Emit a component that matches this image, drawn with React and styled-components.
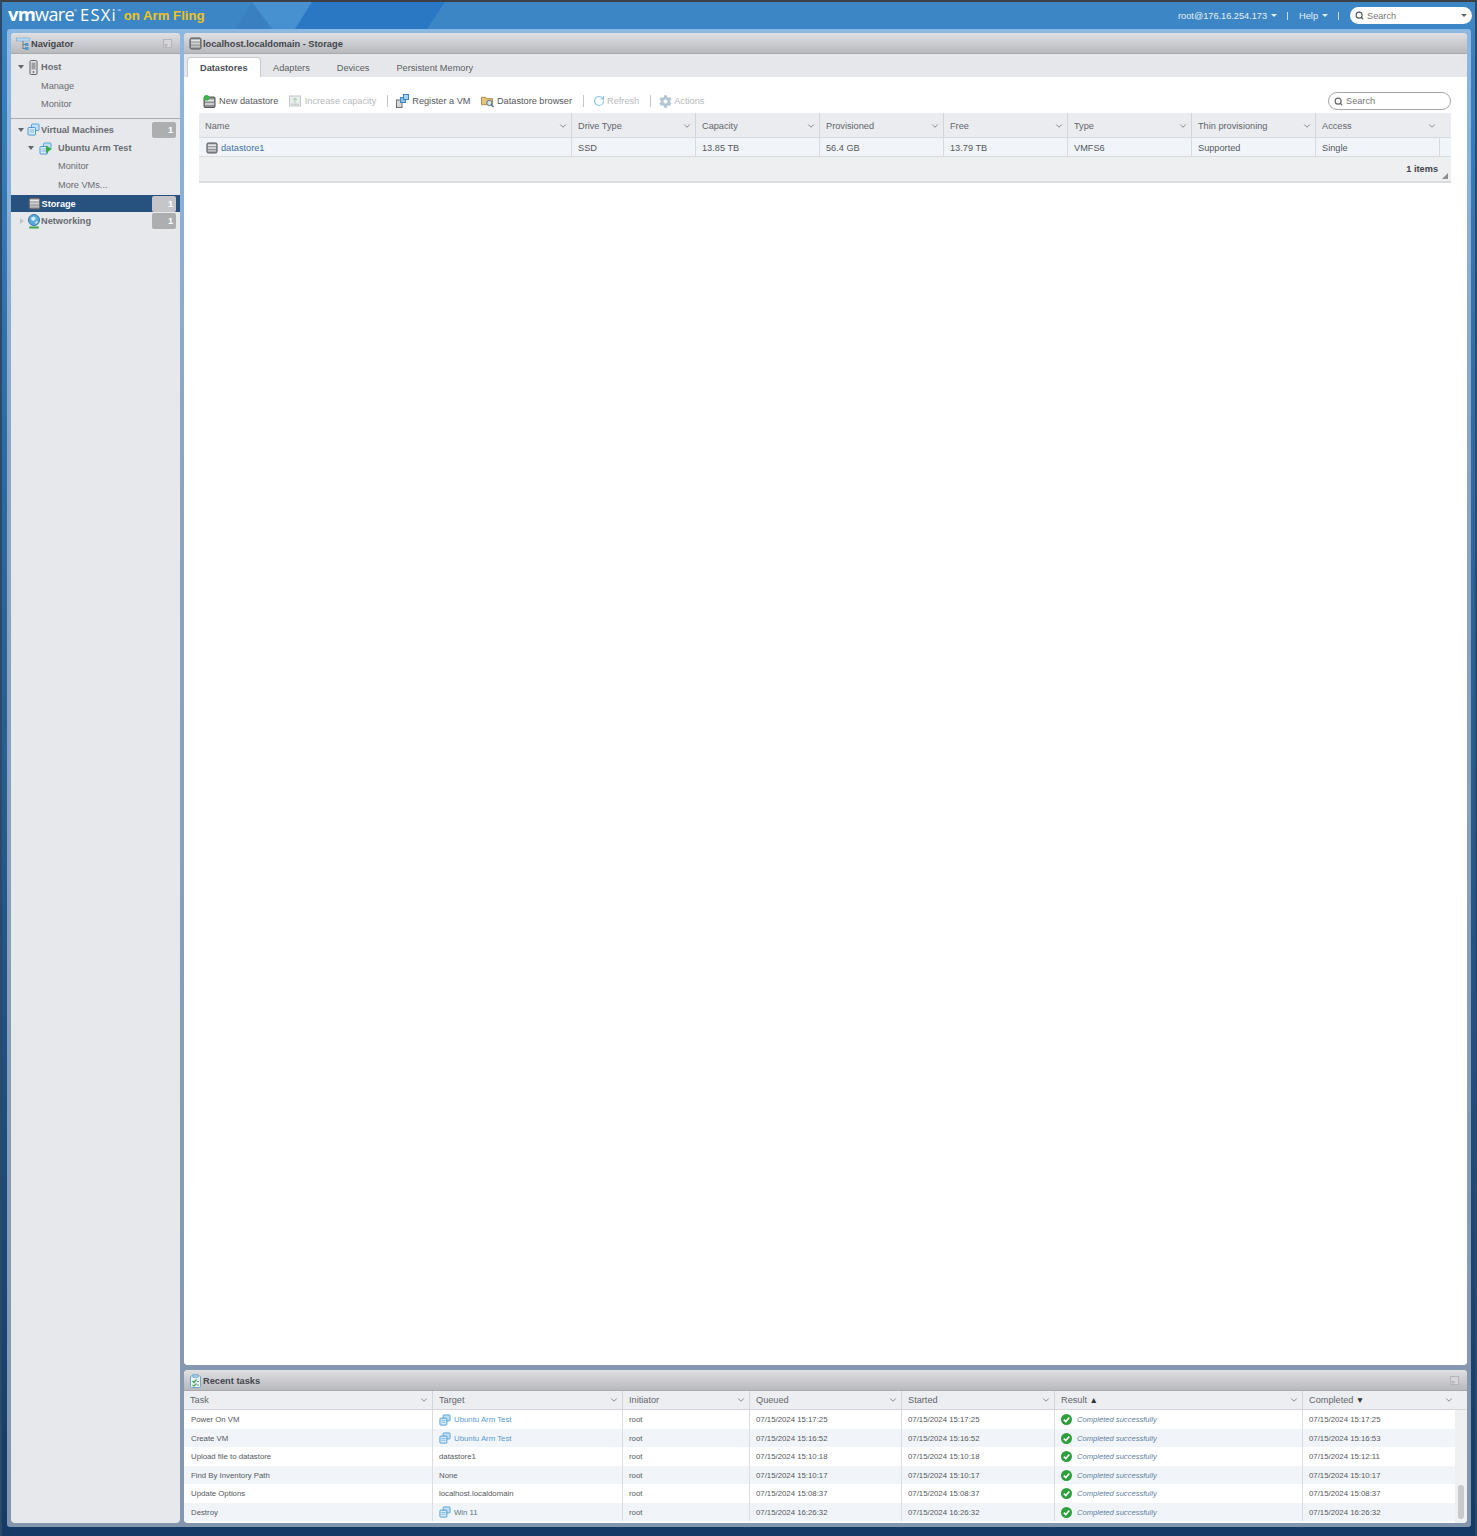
import React from "react";
import styled, { createGlobalStyle } from "styled-components";
import { ChevronDown, RotateCw, Search } from "lucide-react";
import { FaCog } from "react-icons/fa";

const GlobalStyle = createGlobalStyle`
  html, body {
    margin: 0;
    padding: 0;
  }
  body {
    font-family: "Liberation Sans", Arial, sans-serif;
    font-size: 9.2px;
    color: #555;
  }
  * {
    box-sizing: border-box;
  }
`;

const DatastoreIcon = ({ size = 13 }) => (
  <svg width={size} height={size} viewBox="0 0 13 13">
    <rect x="1" y="1" width="11" height="11" rx="1.5" fill="#8d8f92" stroke="#55575a" />
    <rect x="2" y="2.5" width="9" height="2" fill="#e4e4e4" />
    <rect x="2" y="5.5" width="9" height="2" fill="#d2d2d2" />
    <rect x="2" y="8.5" width="9" height="2" fill="#bdbdbd" />
  </svg>
);

const VmIcon = ({ size = 13, power }) => (
  <svg width={size} height={size} viewBox="0 0 13 13">
    <rect x="4.5" y="1" width="7.5" height="6.5" rx="0.8" fill="#bfe0f5" stroke="#5aa3d6" />
    <rect x="1" y="4.5" width="7.5" height="7.5" rx="0.8" fill="#d8eefb" stroke="#4b97cf" />
    <path d="M2.5 7h4.5M2.5 9h4.5" stroke="#7cb9e2" />
    {power && <path d="M7 3.5 12.5 7 7 11.5z" fill="#39a845" />}
  </svg>
);

const HostIcon = () => (
  <svg width="13" height="15" viewBox="0 0 13 15">
    <rect x="3" y="0.5" width="7" height="14" rx="1.2" fill="#e6e6e6" stroke="#5c5e61" />
    <rect x="4.5" y="2.5" width="4" height="7" fill="#9b9da0" />
    <circle cx="6.5" cy="12" r="1" fill="#6b6d70" />
  </svg>
);

const GlobeIcon = () => (
  <svg width="14" height="15" viewBox="0 0 14 15">
    <circle cx="7" cy="6" r="5.5" fill="#5aa9dd" stroke="#2f78b0" />
    <path d="M4 3.5 7 2.5 9 4.5 6.5 7 4.5 6zM8 8l2-1 1 1-2 2z" fill="#d5ecf9" />
    <rect x="2" y="12.5" width="10" height="2" rx="1" fill="#3fa64a" />
  </svg>
);

const NavigatorIcon = () => (
  <svg width="14" height="14" viewBox="0 0 14 14">
    <rect x="0.5" y="1" width="13" height="3" fill="#b9d9ef" stroke="#6fa8d2" strokeWidth="0.6" />
    <path d="M7 4v8M7 7.5h2.5M7 11.5h2.5" stroke="#777" fill="none" />
    <rect x="9" y="6" width="3.5" height="3" fill="#4a9ad6" />
    <rect x="9" y="10" width="3.5" height="3" fill="#4a9ad6" />
  </svg>
);

const CollapseIcon = () => (
  <svg width="9" height="9" viewBox="0 0 9 9">
    <rect x="0.5" y="0.5" width="8" height="8" fill="#d6d6d9" stroke="#b4b5b8" />
    <rect x="1.5" y="5" width="3" height="2.5" fill="#b5b6b9" />
  </svg>
);

const TasksIcon = () => (
  <svg width="13" height="14" viewBox="0 0 13 14">
    <rect x="1.5" y="2" width="10" height="11.5" rx="1" fill="#e8f3f9" stroke="#6ea5c8" />
    <rect x="4" y="0.5" width="5" height="3" fill="#9cc6e0" stroke="#6ea5c8" strokeWidth="0.6" />
    <path d="M3.5 7 5 8.5 7.5 5.5M3.5 11 5 12 7.5 9.5" stroke="#3fa64a" strokeWidth="1.2" fill="none" />
    <path d="M8 7.5h2M8 11h2" stroke="#7d8a92" />
  </svg>
);

const NewDatastoreIcon = () => (
  <svg width="13" height="13" viewBox="0 0 13 13">
    <rect x="1" y="2" width="11" height="10.5" rx="1" fill="#8d8f92" stroke="#55575a" />
    <rect x="2" y="4.5" width="9" height="2" fill="#e4e4e4" />
    <rect x="2" y="8" width="9" height="2" fill="#cfcfcf" />
    <circle cx="3.5" cy="2.8" r="2.8" fill="#3bb54a" />
  </svg>
);

const IncreaseIcon = () => (
  <svg width="12" height="12" viewBox="0 0 12 12">
    <rect x="0.5" y="1" width="11" height="10" fill="#e8ecec" stroke="#c3c8c8" />
    <path d="M6 3v5M4 5l2-2 2 2" stroke="#a9c9a9" fill="none" />
    <rect x="2" y="8.5" width="8" height="1.5" fill="#cdd1d1" />
  </svg>
);

const RegisterIcon = () => (
  <svg width="13" height="14" viewBox="0 0 13 14">
    <rect x="0.5" y="6" width="5.5" height="7.5" fill="#d8d9da" stroke="#6c6e70" />
    <rect x="4.5" y="3.5" width="5" height="5" fill="#8cc2e8" stroke="#3d86bf" />
    <rect x="7.5" y="0.5" width="5" height="5" fill="#a5d2ef" stroke="#3d86bf" />
  </svg>
);

const BrowserIcon = () => (
  <svg width="13" height="13" viewBox="0 0 14 13">
    <path d="M0.5 2h4.5l1 1.5h6.5V10H0.5z" fill="#e7c47a" stroke="#a8874a" />
    <circle cx="9" cy="8" r="2.8" fill="#cfe6f3" stroke="#4d6f86" />
    <path d="m11 10 2.5 2.5" stroke="#4d6f86" strokeWidth="1.4" />
  </svg>
);

const SuccessIcon = () => (
  <svg width="11" height="11" viewBox="0 0 11 11">
    <circle cx="5.5" cy="5.5" r="5.5" fill="#2f9e3f" />
    <path d="M2.8 5.6 4.8 7.6 8.3 3.6" stroke="#fff" strokeWidth="1.5" fill="none" />
  </svg>
);

const hostTree = [
  { label: "Host", indent: 7, caret: "down", icon: <HostIcon />, bold: true },
  { label: "Manage", indent: 30 },
  { label: "Monitor", indent: 30 },
];

const inventoryTree = [
  { label: "Virtual Machines", indent: 7, caret: "down", icon: <VmIcon />, count: 1, bold: true },
  { label: "Ubuntu Arm Test", indent: 17, caret: "down", icon: <VmIcon power />, wide: true, bold: true },
  { label: "Monitor", indent: 47 },
  { label: "More VMs...", indent: 47 },
  { label: "Storage", indent: 16.5, icon: <DatastoreIcon />, count: 1, selected: true, bold: true },
  { label: "Networking", indent: 8, caret: "right", icon: <GlobeIcon />, count: 1, bold: true },
];

const tabs = ["Datastores", "Adapters", "Devices", "Persistent Memory"];

const toolbar = [
  { label: "New datastore", icon: <NewDatastoreIcon /> },
  { label: "Increase capacity", icon: <IncreaseIcon />, disabled: true, sep: true },
  { label: "Register a VM", icon: <RegisterIcon /> },
  { label: "Datastore browser", icon: <BrowserIcon />, sep: true },
  { label: "Refresh", icon: <RotateCw size={12} color="#8cc4ea" strokeWidth={2.4} />, disabled: true, sep: true, gap: 2 },
  { label: "Actions", icon: <FaCog size={13} color="#b3c6d6" />, disabled: true, gap: 2 },
];

const storageColumns = "373px 124px 124px 124px 124px 124px 124px 135px";
const storageHead = ["Name", "Drive Type", "Capacity", "Provisioned", "Free", "Type", "Thin provisioning", "Access"];
const storageRow = ["SSD", "13.85 TB", "56.4 GB", "13.79 TB", "VMFS6", "Supported", "Single"];

const taskHead = ["Task", "Target", "Initiator", "Queued", "Started", "Result", "Completed"];
const taskRows = [
  ["Power On VM", "Ubuntu Arm Test", "07/15/2024 15:17:25", "07/15/2024 15:17:25", "07/15/2024 15:17:25", true],
  ["Create VM", "Ubuntu Arm Test", "07/15/2024 15:16:52", "07/15/2024 15:16:52", "07/15/2024 15:16:53", true],
  ["Upload file to datastore", "datastore1", "07/15/2024 15:10:18", "07/15/2024 15:10:18", "07/15/2024 15:12:11"],
  ["Find By Inventory Path", "None", "07/15/2024 15:10:17", "07/15/2024 15:10:17", "07/15/2024 15:10:17"],
  ["Update Options", "localhost.localdomain", "07/15/2024 15:08:37", "07/15/2024 15:08:37", "07/15/2024 15:08:37"],
  ["Destroy", "Win 11", "07/15/2024 16:26:32", "07/15/2024 16:26:32", "07/15/2024 16:26:32", "dim"],
];

function TreeRow({ item }) {
  return (
    <NavRow $indent={item.indent} $selected={item.selected} $bold={item.bold}>
      {item.caret && <Caret $dir={item.caret} />}
      {item.icon && <NavIcon $wide={item.wide}>{item.icon}</NavIcon>}
      <span>{item.label}</span>
      {item.count && <Badge $selected={item.selected}>{item.count}</Badge>}
    </NavRow>
  );
}

export default function App() {
  return (
    <>
      <GlobalStyle />
      <Shell>
        <TopBar>
          <TopShape $points="250px 0, 310px 0, 293px 27px, 270px 27px" $color="#4891d0" />
          <TopShape $points="250px 0, 233px 27px, 270px 27px" $color="#3a80c0" />
          <TopShape $points="310px 0, 443px 0, 425px 27px, 293px 27px" $color="#2a78c4" />
          <Logo>
            <LogoVm>vm</LogoVm>
            <LogoWare>ware</LogoWare>
            <LogoMark>®</LogoMark>
            <LogoEsx>ESXi</LogoEsx>
            <LogoMark>™</LogoMark>
            <LogoFling>on Arm Fling</LogoFling>
          </Logo>
          <TopMenu>
            <TopLink>root@176.16.254.173</TopLink>
            <TopCaret />
            <TopPipe />
            <TopLink>Help</TopLink>
            <TopCaret />
            <TopPipe />
            <TopSearch>
              <Search size={9} color="#555" strokeWidth={3} />
              <span>Search</span>
              <SearchCaret />
            </TopSearch>
          </TopMenu>
        </TopBar>
        <Workspace>
          <Navigator>
            <PanelHead>
              <NavigatorIcon />
              <PanelTitle>Navigator</PanelTitle>
              <HeadEnd>
                <CollapseIcon />
              </HeadEnd>
            </PanelHead>
            <TreeGroup>
              {hostTree.map((item) => (
                <TreeRow key={item.label} item={item} />
              ))}
            </TreeGroup>
            <TreeList>
              {inventoryTree.map((item) => (
                <TreeRow key={item.label} item={item} />
              ))}
            </TreeList>
          </Navigator>
          <RightColumn>
            <MainPanel>
              <PanelHead>
                <DatastoreIcon />
                <PanelTitle>localhost.localdomain - Storage</PanelTitle>
              </PanelHead>
              <TabBar>
                {tabs.map((tab, i) => (
                  <Tab key={tab} $active={i === 0}>
                    {tab}
                  </Tab>
                ))}
              </TabBar>
              <Content>
                <Toolbar>
                  {toolbar.map((tool) => (
                    <React.Fragment key={tool.label}>
                      <Tool $disabled={tool.disabled} $gap={tool.gap}>
                        <ToolIcon>{tool.icon}</ToolIcon>
                        <span>{tool.label}</span>
                      </Tool>
                      {tool.sep && <ToolSep />}
                    </React.Fragment>
                  ))}
                  <GridSearch>
                    <Search size={9} color="#666" strokeWidth={3} />
                    <span>Search</span>
                  </GridSearch>
                </Toolbar>
                <Grid>
                  <HeadRow $columns={storageColumns}>
                    {storageHead.map((label) => (
                      <HeadCell key={label}>
                        <span>{label}</span>
                        <ChevronDown size={10} color="#777" />
                      </HeadCell>
                    ))}
                  </HeadRow>
                  <StorageRow $columns={storageColumns}>
                    <NameCell>
                      <DatastoreIcon size={12} />
                      <StorageLink>datastore1</StorageLink>
                    </NameCell>
                    {storageRow.map((value) => (
                      <StorageCell key={value}>{value}</StorageCell>
                    ))}
                  </StorageRow>
                  <GridFoot>
                    <span>1 items</span>
                    <ResizeGrip />
                  </GridFoot>
                </Grid>
              </Content>
            </MainPanel>
            <TasksPanel>
              <PanelHead>
                <TasksIcon />
                <PanelTitle>Recent tasks</PanelTitle>
                <HeadEnd>
                  <CollapseIcon />
                </HeadEnd>
              </PanelHead>
              <TaskHeadRow>
                {taskHead.map((label) => (
                  <TaskHeadCell key={label}>
                    <span>
                      {label}
                      {label === "Result" && <SortMark> ▲</SortMark>}
                      {label === "Completed" && <SortMark> ▼</SortMark>}
                    </span>
                    <ChevronDown size={10} color="#777" />
                  </TaskHeadCell>
                ))}
              </TaskHeadRow>
              <TaskBody>
                <TaskRows>
                  {taskRows.map((row) => (
                    <TaskRow key={row[0]}>
                      <TaskCell>{row[0]}</TaskCell>
                      <TaskCell>
                        {row[5] && <VmIcon size={12} />}
                        {row[5] ? <TargetLink $dim={row[5] === "dim"}>{row[1]}</TargetLink> : row[1]}
                      </TaskCell>
                      <TaskCell>root</TaskCell>
                      <TaskCell>{row[2]}</TaskCell>
                      <TaskCell>{row[3]}</TaskCell>
                      <TaskCell>
                        <SuccessIcon />
                        <ResultText>Completed successfully</ResultText>
                      </TaskCell>
                      <TaskCell>{row[4]}</TaskCell>
                    </TaskRow>
                  ))}
                </TaskRows>
                <Scrollbar>
                  <ScrollThumb />
                </Scrollbar>
              </TaskBody>
            </TasksPanel>
          </RightColumn>
        </Workspace>
      </Shell>
    </>
  );
}

const Shell = styled.div`
  width: 1477px;
  height: 1536px;
  display: flex;
  flex-direction: column;
  border-top: 2px solid #3d3f42;
  border-left: 2px solid #2c4a68;
  border-right: 2px solid #2c4a68;
  background: linear-gradient(180deg, #3a85c6 0%, #2f6ea8 25%, #1f4f80 70%, #153a66 100%);
`;

const TopBar = styled.header`
  position: relative;
  height: 27px;
  flex: none;
  display: flex;
  align-items: center;
  padding: 0 3px 0 6px;
  background: #3c86c6;
  overflow: hidden;
`;

const TopShape = styled.i`
  position: absolute;
  inset: 0;
  background: ${(p) => p.$color};
  clip-path: polygon(${(p) => p.$points});
`;

const Logo = styled.div`
  position: relative;
  z-index: 1;
  display: flex;
  align-items: baseline;
  margin-top: -3px;
  color: #fff;
  line-height: 1;
`;

const LogoVm = styled.span`
  font-family: "Open Sans", sans-serif;
  font-weight: 700;
  font-size: 18.5px;
  letter-spacing: -0.8px;
`;

const LogoWare = styled.span`
  font-family: "Open Sans", sans-serif;
  font-weight: 400;
  font-size: 18px;
  letter-spacing: -0.6px;
`;

const LogoMark = styled.sup`
  font-size: 4px;
  line-height: 0;
  align-self: flex-start;
  margin-top: 6px;
`;

const LogoEsx = styled.span`
  margin-left: 3px;
  font-family: "Open Sans", sans-serif;
  font-size: 16.5px;
  letter-spacing: 1.2px;
`;

const LogoFling = styled.span`
  margin-left: 3px;
  font-weight: 700;
  font-size: 13.2px;
  color: #efc21e;
  transform: translateY(-1px);
`;

const TopMenu = styled.nav`
  position: relative;
  z-index: 1;
  margin-left: auto;
  display: flex;
  align-items: center;
  color: #e6f0fa;
`;

const TopLink = styled.span`
  white-space: nowrap;
`;

const TopCaret = styled.i`
  width: 0;
  height: 0;
  margin-left: 4px;
  border: 3px solid transparent;
  border-top-color: #e6f0fa;
  border-bottom: 0;
`;

const TopPipe = styled.i`
  width: 1px;
  height: 8px;
  margin: 0 11px 0 10px;
  background: #c5daee;
`;

const TopSearch = styled.div`
  width: 122px;
  height: 17px;
  display: flex;
  align-items: center;
  gap: 3px;
  padding: 0 5px;
  background: #fff;
  border-radius: 9px;
  color: #777;
`;

const SearchCaret = styled.i`
  margin-left: auto;
  border: 3px solid transparent;
  border-top-color: #666;
  border-bottom: 0;
`;

const Workspace = styled.main`
  flex: 1;
  min-height: 0;
  display: flex;
  gap: 4px;
  margin: 0 4px 9px 5px;
  padding: 4px;
  border-radius: 3px;
  background: linear-gradient(180deg, #8cb8e2 0%, #8ba4c1 30%, #8496ad 100%);
`;

const Panel = styled.section`
  display: flex;
  flex-direction: column;
  border-radius: 4px;
  overflow: hidden;
  background: #e7e8eb;
`;

const Navigator = styled(Panel)`
  width: 169px;
  flex: none;
`;

const RightColumn = styled.div`
  flex: 1;
  min-width: 0;
  display: flex;
  flex-direction: column;
  gap: 5px;
`;

const MainPanel = styled(Panel)`
  flex: 1;
  min-height: 0;
`;

const TasksPanel = styled(Panel)`
  height: 153px;
  flex: none;
  background: #fff;
`;

const PanelHead = styled.header`
  height: 21px;
  flex: none;
  display: flex;
  align-items: center;
  gap: 1px;
  padding: 1px 8px 0 5px;
  background: linear-gradient(180deg, #e0e0e3 0%, #b8b9bd 100%);
  border-bottom: 1px solid #a9aaae;
`;

const PanelTitle = styled.h2`
  margin: 0;
  font-size: 9.25px;
  font-weight: 700;
  color: #43464b;
`;

const HeadEnd = styled.div`
  margin-left: auto;
  display: flex;
`;

const TreeGroup = styled.div`
  padding: 4px 0 0;
  height: 65px;
  flex: none;
  border-bottom: 1px solid #a9aaae;
`;

const TreeList = styled.div`
  padding-top: 1.5px;
`;

const NavRow = styled.div`
  height: ${(p) => (p.$selected ? 17 : 18.4)}px;
  margin-top: ${(p) => (p.$selected ? 1 : 0)}px;
  display: flex;
  align-items: center;
  padding-left: ${(p) => p.$indent}px;
  padding-right: 4px;
  font-weight: ${(p) => (p.$bold ? 700 : 400)};
  color: ${(p) => (p.$selected ? "#fff" : "#696c72")};
  background: ${(p) => (p.$selected ? "#27527f" : "transparent")};
`;

const Caret = styled.i`
  width: 0;
  height: 0;
  margin-right: 3px;
  border-style: solid;
  border-color: transparent;
  ${(p) =>
    p.$dir === "down"
      ? "border-width: 4px 3px 0; border-top-color: #666;"
      : "border-width: 3px 0 3px 4px; border-left-color: #c4c5c8; margin-left: 1px;"}
`;

const NavIcon = styled.span`
  width: ${(p) => (p.$wide ? 21 : 14)}px;
  padding-left: ${(p) => (p.$wide ? 2 : 0)}px;
  display: flex;
  flex: none;
`;

const Badge = styled.b`
  margin-left: auto;
  width: 24px;
  height: 16px;
  padding-right: 3px;
  border-radius: 2px;
  text-align: right;
  line-height: 16px;
  color: #fff;
  background: ${(p) => (p.$selected ? "#c4c6c9" : "#adaeb0")};
`;

const TabBar = styled.div`
  height: 23px;
  flex: none;
  display: flex;
  align-items: flex-end;
  padding-left: 4px;
  background: #e6e7ea;
`;

const Tab = styled.div`
  height: 19px;
  padding: 1px 13.5px 0;
  display: flex;
  align-items: center;
  font-weight: ${(p) => (p.$active ? 700 : 400)};
  color: #5c5f64;
  ${(p) =>
    p.$active &&
    `
    padding: 1px 12px 0;
    background: #fff;
    border-radius: 3px 3px 0 0;
    box-shadow: 0 0 0 1px #c9cacd;
    color: #4b4e53;
  `}
`;

const Content = styled.div`
  flex: 1;
  padding: 12px 16px 0 15px;
  background: #fff;
`;

const Toolbar = styled.div`
  height: 24px;
  display: flex;
  align-items: center;
  padding-left: 4px;
`;

const Tool = styled.div`
  display: flex;
  align-items: center;
  gap: ${(p) => p.$gap ?? 3}px;
  margin-right: 10.5px;
  color: ${(p) => (p.$disabled ? "#b8babd" : "#55585d")};
`;

const ToolIcon = styled.span`
  width: 13px;
  display: flex;
  justify-content: center;
`;

const ToolSep = styled.i`
  width: 1px;
  height: 12px;
  margin-right: 8.5px;
  background: #c5c6c9;
`;

const GridSearch = styled.div`
  margin-left: auto;
  width: 123px;
  height: 18px;
  display: flex;
  align-items: center;
  gap: 3px;
  padding: 0 5px;
  border: 1px solid #a5a6a9;
  border-radius: 9px;
  color: #777;
`;

const Grid = styled.div`
  width: 1252px;
`;

const HeadRow = styled.div`
  height: 25px;
  display: grid;
  grid-template-columns: ${(p) => p.$columns};
  background: #ebecef;
  border-bottom: 1px solid #d8d9dc;
`;

const HeadCell = styled.div`
  display: flex;
  align-items: center;
  justify-content: space-between;
  padding: 1px 3px 0 6px;
  border-right: 1px solid #d4d5d8;
  color: #62656b;
  &:last-child {
    border-right: 0;
    padding-right: 14px;
  }
`;

const StorageRow = styled.div`
  height: 19px;
  display: grid;
  grid-template-columns: ${(p) => p.$columns};
  background: #f1f5fa;
  border-bottom: 1px solid #dadbde;
`;

const StorageCell = styled.div`
  display: flex;
  align-items: center;
  padding: 1px 0 0 6px;
  border-right: 1px solid #dadbde;
  color: #55585d;
  &:last-child {
    margin-right: 11px;
  }
`;

const NameCell = styled(StorageCell)`
  gap: 3px;
  padding-left: 7px;
`;

const StorageLink = styled.span`
  color: #3f72a8;
`;

const GridFoot = styled.div`
  position: relative;
  height: 26px;
  display: flex;
  align-items: center;
  justify-content: flex-end;
  padding-right: 13px;
  font-weight: 700;
  color: #43464b;
  background: #eeeff1;
  border-bottom: 2px solid #dcdde0;
`;

const ResizeGrip = styled.i`
  position: absolute;
  right: 3px;
  bottom: 2px;
  width: 0;
  height: 0;
  border-style: solid;
  border-width: 0 0 6px 6px;
  border-color: transparent transparent #8d8e91 transparent;
`;

const TaskHeadRow = styled.div`
  height: 19px;
  flex: none;
  display: grid;
  grid-template-columns: 249px 190px 127px 152px 153px 248px 164px;
  background: #edeef1;
  border-bottom: 1px solid #d6d7da;
`;

const TaskHeadCell = styled.div`
  display: flex;
  align-items: center;
  justify-content: space-between;
  padding: 0 3px 0 6px;
  border-right: 1px solid #d4d5d8;
  color: #62656b;
  &:last-child {
    border-right: 0;
    padding-right: 13px;
  }
`;

const SortMark = styled.span`
  font-size: 8.5px;
  color: #333;
`;

const TaskBody = styled.div`
  flex: 1;
  min-height: 0;
  display: flex;
`;

const TaskRows = styled.div`
  flex: 1;
  min-width: 0;
`;

const TaskRow = styled.div`
  height: 18.5px;
  display: grid;
  grid-template-columns: 249px 190px 127px 152px 153px 248px 152px;
  background: #fff;
  &:nth-child(even) {
    background: #f1f5fa;
  }
`;

const TaskCell = styled.div`
  display: flex;
  align-items: center;
  gap: 3px;
  padding: 1px 0 0 6px;
  font-size: 7.8px;
  color: #55585d;
  border-right: 1px solid #dcdde0;
  white-space: nowrap;
  &:first-child {
    padding-left: 7px;
  }
  &:last-child {
    border-right: 0;
  }
`;

const TargetLink = styled.span`
  color: ${(p) => (p.$dim ? "#5c7186" : "#5a9bd2")};
`;

const ResultText = styled.em`
  margin-left: 2px;
  font-size: 7.6px;
  color: #5f7fa3;
`;

const Scrollbar = styled.div`
  position: relative;
  width: 12px;
  flex: none;
  background: #eef0f1;
`;

const ScrollThumb = styled.i`
  position: absolute;
  left: 3px;
  right: 3px;
  bottom: 4px;
  height: 34px;
  border-radius: 3px;
  background: #c8c9cb;
`;
